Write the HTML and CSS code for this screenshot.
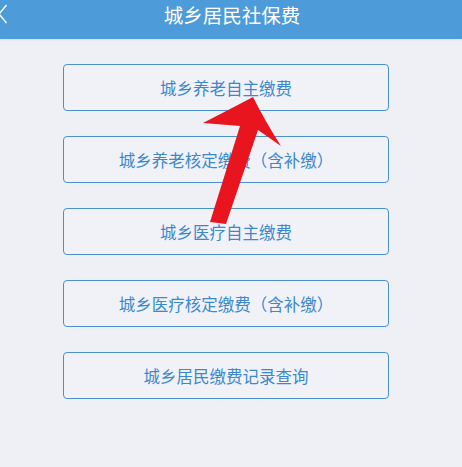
FILE: index.html
```html
<!DOCTYPE html>
<html lang="zh">
<head>
<meta charset="utf-8">
<link rel="stylesheet" href="styles.css">
</head>
<body>
<header class="topbar">
  <svg class="back" viewBox="0 0 10 22" width="10" height="22"><path d="M7.5 2 L0 11 L7.5 20" fill="none" stroke="#ffffff" stroke-width="1.5"/></svg>
  <h1 class="title">城乡居民社保费</h1>
</header>
<main class="menu">
  <a class="item">城乡养老自主缴费</a>
  <a class="item">城乡养老核定缴费（含补缴）</a>
  <a class="item">城乡医疗自主缴费</a>
  <a class="item">城乡医疗核定缴费（含补缴）</a>
  <a class="item">城乡居民缴费记录查询</a>
</main>
<svg class="arrow" viewBox="0 0 462 467" width="462" height="467">
  <path d="M253,97 Q236,106 203,123 L240,126 L210,222 L226,224 L258,130 L281,146 Q265,121 253,97 Z" fill="#e8141e"/>
</svg>
</body>
</html>
```
FILE: styles.css
```css
html, body {
  margin: 0;
  padding: 0;
}
body {
  width: 462px;
  height: 467px;
  background: #eff0f5;
  font-family: "Noto Sans CJK SC", "Noto Sans", sans-serif;
  position: relative;
  overflow: hidden;
}
.topbar {
  height: 39px;
  background: #4d9bd8;
  position: relative;
  box-shadow: 0 1px 2px rgba(0,0,0,0.08);
}
.back {
  position: absolute;
  left: -1px;
  top: 3px;
}
.title {
  margin: 0;
  font-size: 19.5px;
  font-weight: 400;
  line-height: 30px;
  color: #ffffff;
  text-align: center;
  padding-left: 2px;
}
.menu {
  display: flex;
  flex-direction: column;
  gap: 25px;
  padding-top: 25px;
  margin-left: 63px;
  width: 326px;
}
.item {
  box-sizing: border-box;
  height: 47px;
  border: 1.5px solid #4a8fd2;
  border-radius: 4px;
  background: #f1f2f7;
  color: #3b88cf;
  font-size: 16.5px;
  display: flex;
  align-items: center;
  justify-content: center;
}
.arrow {
  position: absolute;
  left: 0;
  top: 0;
}
```
